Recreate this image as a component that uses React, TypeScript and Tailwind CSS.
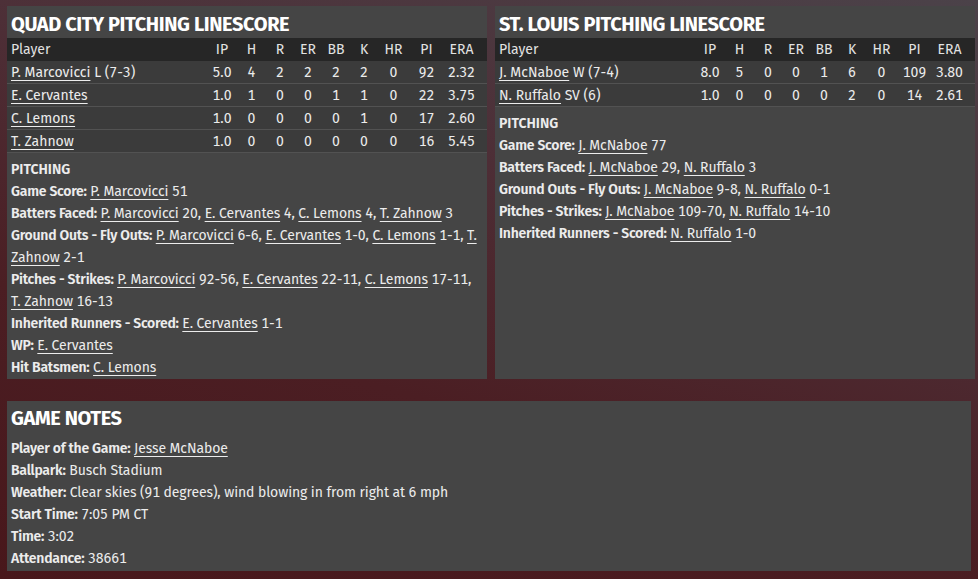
import React from 'react';

type Line = { who: string; rec?: string; v: string[] };

const qcRows: Line[] = [
  { who: 'P. Marcovicci', rec: 'L (7-3)', v: ['5.0', '4', '2', '2', '2', '2', '0', '92', '2.32'] },
  { who: 'E. Cervantes', v: ['1.0', '1', '0', '0', '1', '1', '0', '22', '3.75'] },
  { who: 'C. Lemons', v: ['1.0', '0', '0', '0', '0', '1', '0', '17', '2.60'] },
  { who: 'T. Zahnow', v: ['1.0', '0', '0', '0', '0', '0', '0', '16', '5.45'] },
];

const slRows: Line[] = [
  { who: 'J. McNaboe', rec: 'W (7-4)', v: ['8.0', '5', '0', '0', '1', '6', '0', '109', '3.80'] },
  { who: 'N. Ruffalo', rec: 'SV (6)', v: ['1.0', '0', '0', '0', '0', '2', '0', '14', '2.61'] },
];

const cols = ['IP', 'H', 'R', 'ER', 'BB', 'K', 'HR', 'PI', 'ERA'];
const grid = 'grid grid-cols-[200px_30px_29px_28px_28px_28px_28px_31px_35px_35px] items-center';

function L({ children }: { children: React.ReactNode }) {
  return <span className="underline underline-offset-[3px] decoration-1">{children}</span>;
}

function Stat({ label, children }: { label: string; children?: React.ReactNode }) {
  return (
    <div className="leading-[22px] tracking-[-0.1px]">
      <span className="font-semibold tracking-[-0.25px]">{label}:</span> {children}
    </div>
  );
}

function Linescore({ title, rows, children }: { title: string; rows: Line[]; children: React.ReactNode }) {
  return (
    <div className="bg-[#454545] flex flex-col">
      <div className="h-8 px-1 pt-[3px] flex items-center text-[20px] font-bold text-white tracking-[-0.4px]">{title}</div>
      <div className={`${grid} h-[23px] bg-[#262626] text-[#e2e2e2]`}>
        <div className="pl-1">Player</div>
        {cols.map((c) => (
          <div key={c} className="text-center">{c}</div>
        ))}
      </div>
      {rows.map((r) => (
        <div key={r.who} className={`${grid} h-[23px] bg-[#3b3b3b] border-b border-[#525252]`}>
          <div className="pl-1">
            <L>{r.who}</L>
            {r.rec && <span> {r.rec}</span>}
          </div>
          {r.v.map((x, i) => (
            <div key={i} className="text-center">{x}</div>
          ))}
        </div>
      ))}
      <div className="px-1 pt-[6px] text-[14px]">
        <div className="font-semibold leading-[22px]">PITCHING</div>
        {children}
      </div>
    </div>
  );
}

export default function App() {
  return (
    <div
      className="w-[978px] h-[579px] overflow-hidden bg-[linear-gradient(195deg,#4b4249_0%,#4d2e36_35%,#4b1e23_65%,#48171b_100%)] px-[7px] pt-[6px] text-[#ececec] text-[14px] tabular-nums"
      style={{ fontFamily: '"Fira Sans", Roboto, "Liberation Sans", sans-serif' }}
    >
      <div className="grid grid-cols-[480px_480px] gap-2 h-[372px]">
        <Linescore title="QUAD CITY PITCHING LINESCORE" rows={qcRows}>
          <Stat label="Game Score"><L>P. Marcovicci</L> 51</Stat>
          <Stat label="Batters Faced">
            <L>P. Marcovicci</L> 20, <L>E. Cervantes</L> 4, <L>C. Lemons</L> 4, <L>T. Zahnow</L> 3
          </Stat>
          <Stat label="Ground Outs - Fly Outs">
            <L>P. Marcovicci</L> 6-6, <L>E. Cervantes</L> 1-0, <L>C. Lemons</L> 1-1, <L>T. Zahnow</L> 2-1
          </Stat>
          <Stat label="Pitches - Strikes">
            <L>P. Marcovicci</L> 92-56, <L>E. Cervantes</L> 22-11, <L>C. Lemons</L> 17-11, <L>T. Zahnow</L> 16-13
          </Stat>
          <Stat label="Inherited Runners - Scored"><L>E. Cervantes</L> 1-1</Stat>
          <Stat label="WP"><L>E. Cervantes</L></Stat>
          <Stat label="Hit Batsmen"><L>C. Lemons</L></Stat>
        </Linescore>
        <Linescore title="ST. LOUIS PITCHING LINESCORE" rows={slRows}>
          <Stat label="Game Score"><L>J. McNaboe</L> 77</Stat>
          <Stat label="Batters Faced"><L>J. McNaboe</L> 29, <L>N. Ruffalo</L> 3</Stat>
          <Stat label="Ground Outs - Fly Outs"><L>J. McNaboe</L> 9-8, <L>N. Ruffalo</L> 0-1</Stat>
          <Stat label="Pitches - Strikes"><L>J. McNaboe</L> 109-70, <L>N. Ruffalo</L> 14-10</Stat>
          <Stat label="Inherited Runners - Scored"><L>N. Ruffalo</L> 1-0</Stat>
        </Linescore>
      </div>

      <div className="mt-[23px] h-[170px] bg-[#454545] px-1">
        <div className="h-[37px] pb-[3px] flex items-center text-[20px] font-bold text-white tracking-[-0.4px]">GAME NOTES</div>
        <Stat label="Player of the Game"><L>Jesse McNaboe</L></Stat>
        <Stat label="Ballpark">Busch Stadium</Stat>
        <Stat label="Weather">Clear skies (91 degrees), wind blowing in from right at 6 mph</Stat>
        <Stat label="Start Time">7:05 PM CT</Stat>
        <Stat label="Time">3:02</Stat>
        <Stat label="Attendance">38661</Stat>
      </div>
    </div>
  );
}
